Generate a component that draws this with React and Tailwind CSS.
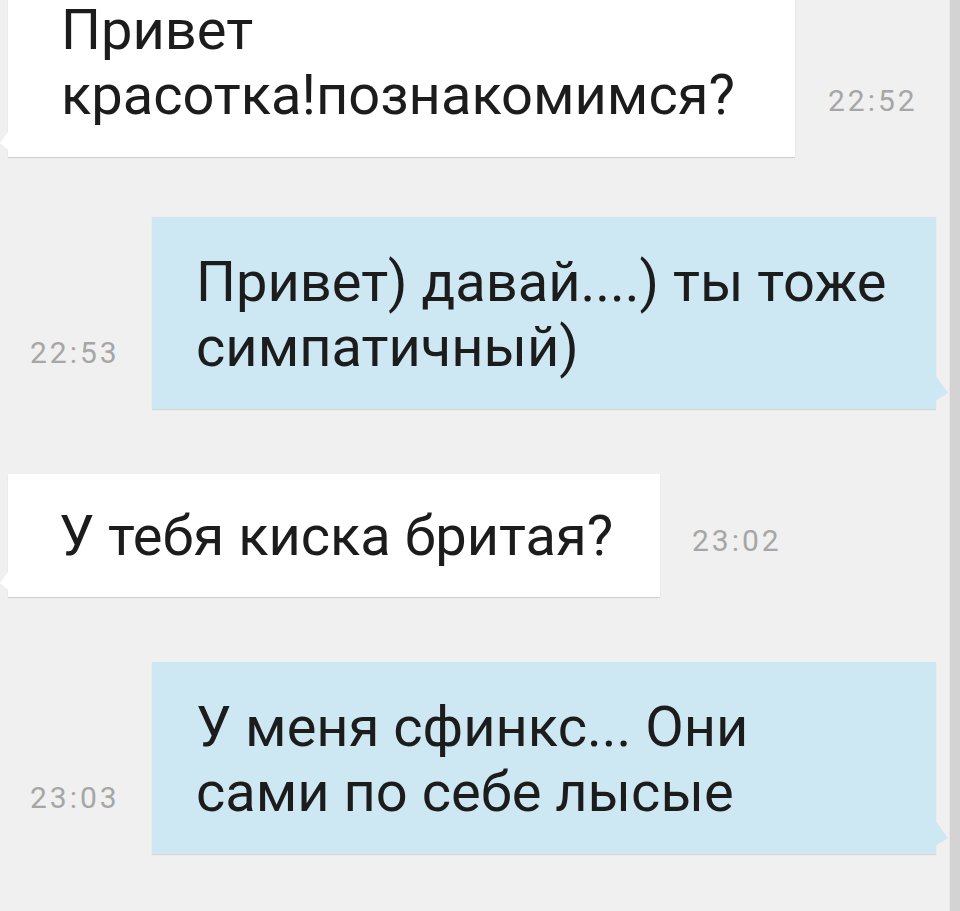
import React from "react";

const font = { fontFamily: "Roboto, 'Noto Sans', sans-serif" };

function LeftTail() {
  return (
    <svg className="absolute left-[-8px] bottom-[6px]" width="10" height="22" viewBox="0 0 10 22">
      <path d="M10 0 L10 22 L0 14 Z" fill="#ffffff" />
    </svg>
  );
}

function RightTail() {
  return (
    <svg className="absolute right-[-12px] bottom-[8px]" width="13" height="26" viewBox="0 0 13 26">
      <path d="M0 0 L13 18 L0 26 Z" fill="#cde8f3" />
    </svg>
  );
}

function Time({ children, className = "" }) {
  return (
    <div
      className={"text-[30px] leading-[30px] tracking-[3px] text-[#a6a6a6] mb-[41px] " + className}
      style={font}
    >
      {children}
    </div>
  );
}

function Text({ lines }) {
  return (
    <div className="text-[56px] leading-[65px] text-[#1c1c1c] whitespace-nowrap" style={font}>
      {lines.map((l, i) => (
        <div key={i}>{l}</div>
      ))}
    </div>
  );
}

export default function App() {
  return (
    <div className="flex w-[960px] h-[911px] overflow-hidden">
      <div className="flex-1 bg-[#f0f0f0] flex flex-col">
        <div className="flex items-end mt-[-34px] pl-[8px]">
          <div className="relative bg-white w-[787px] pl-[53px] pt-[32px] pb-[29px] shadow-[0_1px_1px_rgba(0,0,0,0.12)]">
            <Text lines={["Привет", "красотка!познакомимся?"]} />
            <LeftTail />
          </div>
          <Time className="ml-[33px]">22:52</Time>
        </div>

        <div className="flex items-end mt-[60px] pl-[30px]">
          <Time className="w-[122px]">22:53</Time>
          <div className="relative bg-[#cde8f3] w-[784px] pl-[44px] pt-[33px] pb-[29px] shadow-[0_1px_1px_rgba(0,0,0,0.1)]">
            <Text lines={["Привет) давай....) ты тоже", "симпатичный)"]} />
            <RightTail />
          </div>
        </div>

        <div className="flex items-end mt-[65px] pl-[8px]">
          <div className="relative bg-white w-[652px] pl-[51px] pt-[30px] pb-[28px] shadow-[0_1px_1px_rgba(0,0,0,0.12)]">
            <Text lines={["У тебя киска бритая?"]} />
            <LeftTail />
          </div>
          <Time className="ml-[32px]">23:02</Time>
        </div>

        <div className="flex items-end mt-[65px] pl-[30px]">
          <Time className="w-[122px]">23:03</Time>
          <div className="relative bg-[#cde8f3] w-[784px] pl-[44px] pt-[33px] pb-[29px] shadow-[0_1px_1px_rgba(0,0,0,0.1)]">
            <Text lines={["У меня сфинкс... Они", "сами по себе лысые"]} />
            <RightTail />
          </div>
        </div>
      </div>
      <div className="w-[11px] bg-[#d3d3d3] border-l border-[#e6e6e6]" />
    </div>
  );
}
